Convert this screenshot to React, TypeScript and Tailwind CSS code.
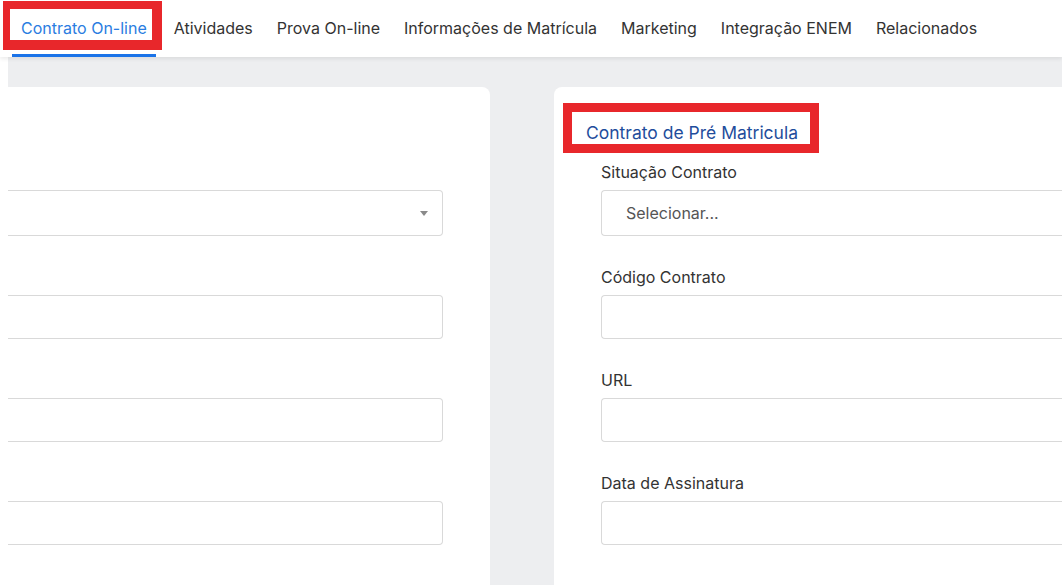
const tabs = [
  "Contrato On-line",
  "Atividades",
  "Prova On-line",
  "Informações de Matrícula",
  "Marketing",
  "Integração ENEM",
  "Relacionados",
];

const fields = ["Código Contrato", "URL", "Data de Assinatura"];

const Caret = () => (
  <svg width="8" height="5" viewBox="0 0 8 5" className="shrink-0">
    <path d="M0 0h8L4 5z" fill="#8a8a8a" />
  </svg>
);

const LeftCard = () => (
  <section className="w-[482px] shrink-0 bg-white rounded-tr-lg pt-[75px] pr-[47px]">
    <div className="h-5" />
    <div className="mt-2 h-[46px] border border-l-0 border-[#d9d9d9] rounded-r flex items-center justify-end pr-[14px]">
      <Caret />
    </div>
    {fields.map((f) => (
      <div key={f} className="mt-[31px]">
        <div className="h-5" />
        <div className="mt-2 h-[44px] border border-l-0 border-[#d9d9d9] rounded-r" />
      </div>
    ))}
  </section>
);

const RightCard = () => (
  <section className="w-[600px] shrink-0 bg-white rounded-tl-lg pt-4 pl-[9px]">
    <div className="inline-block border-[9px] border-[#e8272b]">
      <h2 className="h-8 w-[238px] pl-[14px] pt-[9px] text-[17.5px] leading-6 text-[#1f4d9c] whitespace-nowrap">
        Contrato de Pré Matricula
      </h2>
    </div>
    <div className="pl-[38px] pt-[9px]">
      <label className="block h-5 text-[16px] leading-5 text-[#333]">Situação Contrato</label>
      <div className="mt-2 h-[46px] border border-r-0 border-[#d9d9d9] rounded-l flex items-center pl-[24px] text-[16px] text-[#555]">
        Selecionar...
      </div>
      {fields.map((f) => (
        <div key={f} className="mt-[31px]">
          <label className="block h-5 text-[16px] leading-5 text-[#333]">{f}</label>
          <div className="mt-2 h-[44px] border border-r-0 border-[#d9d9d9] rounded-l" />
        </div>
      ))}
    </div>
  </section>
);

export default function App() {
  return (
    <div className="w-full h-screen overflow-hidden bg-white font-['Inter',sans-serif] flex flex-col">
      <nav className="h-[57px] shrink-0 bg-white flex pl-[12px] gap-[6px] relative z-10 shadow-[0_2px_4px_rgba(0,0,0,0.08)]">
        {tabs.map((t, i) =>
          i === 0 ? (
            <div key={t} className="relative flex flex-col mr-[3px]">
              <div className="flex-1 flex items-center pt-[1px] px-[9px] text-[16px] text-[#2a7de1] relative whitespace-nowrap">
                <span className="relative z-10">{t}</span>
                <span className="absolute left-[-9px] right-[-6px] top-[1px] bottom-[4px] border-t-[8px] border-l-[7px] border-r-[10px] border-b-[10px] border-[#e8272b]" />
              </div>
              <div className="h-[3px] bg-[#1a73e8]" />
            </div>
          ) : (
            <div key={t} className="flex items-center pb-[2px] px-[9px] text-[16px] text-[#333] whitespace-nowrap">
              {t}
            </div>
          )
        )}
      </nav>
      <main className="flex-1 flex">
        <div className="w-2 shrink-0 bg-white" />
        <div className="flex-1 bg-[#edeef0] pt-[30px] flex gap-[64px]">
          <LeftCard />
          <RightCard />
        </div>
      </main>
    </div>
  );
}
